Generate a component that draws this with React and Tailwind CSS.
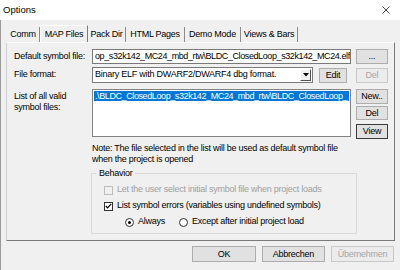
import React from 'react';

const font = { fontFamily: '"Liberation Sans", Arial, sans-serif' };

const Btn = ({ children, className = '', disabled, focus }) => (
  <div
    className={`flex items-center justify-center border text-[9px] leading-none ${
      disabled
        ? 'bg-[#ececec] border-[#c8c8c8] text-[#a6a6a6]'
        : focus
        ? 'bg-[#e1e1e1] border-[#3a3a3a] text-black'
        : 'bg-[#e1e1e1] border-[#adadad] text-black'
    } ${className}`}
  >
    {children}
  </div>
);

const Tab = ({ label, active, w }) => (
  <div
    className={`flex items-center justify-center text-[9px] ${
      active
        ? 'h-[18px] bg-[#f0f0f0] border-t border-l border-white border-r border-r-[#7a7a7a] -mb-px'
        : 'h-[15px] border-r border-[#8a8a8a]'
    }`}
    style={{ width: w }}
  >
    {label}
  </div>
);

export default function App() {
  return (
    <div className="w-[400px] h-[270px] bg-white overflow-hidden flex flex-col text-black tracking-[-0.25px]" style={font}>
      {/* title bar */}
      <div className="h-[20px] flex items-center justify-between pl-[3px] pr-[10px] bg-white">
        <span className="text-[9.5px] tracking-normal">Options</span>
        <svg width="8" height="8" viewBox="0 0 8 8">
          <path d="M0.5 0.5 L7.5 7.5 M7.5 0.5 L0.5 7.5" stroke="#333" strokeWidth="0.9" />
        </svg>
      </div>

      <div className="flex-1 bg-[#f0f0f0] border-l border-[#9a9a9a] flex flex-col">
        {/* tabs */}
        <div className="flex items-end pl-[6px] mt-[4px] h-[18px]">
          <Tab label="Comm" w={33} />
          <Tab label="MAP Files" active w={48} />
          <Tab label="Pack Dir" w={38} />
          <Tab label="HTML Pages" w={59} />
          <Tab label="Demo Mode" w={56} />
          <Tab label="Views & Bars" w={57} />
        </div>

        {/* tab panel */}
        <div className="ml-[5px] w-[389px] h-[199px] border border-t-white border-l-[#d0d0d0] border-r-[#7a7a7a] border-b-[#7a7a7a] flex flex-col pl-[7px] pt-[6px] text-[9px]">
          {/* default symbol file */}
          <div className="flex items-center h-[15px]">
            <div className="w-[78px]">Default symbol file:</div>
            <div className="w-[259px] h-[15px] bg-white border border-[#7a7a7a] flex items-center pl-[2px] overflow-hidden whitespace-nowrap tracking-[-0.4px]">
              op_s32k142_MC24_mbd_rtw\BLDC_ClosedLoop_s32k142_MC24.elf
            </div>
            <Btn className="ml-[5px] w-[32px] h-[15px]">...</Btn>
          </div>

          {/* file format */}
          <div className="flex items-center h-[16px] mt-[3px]">
            <div className="w-[78px]">File format:</div>
            <div className="w-[221px] h-[16px] bg-white border border-[#7a7a7a] flex items-center pl-[2px] pr-[1px]">
              <span className="flex-1 whitespace-nowrap overflow-hidden">Binary ELF with DWARF2/DWARF4 dbg format.</span>
              <div className="w-[11px] h-[12px] bg-[#f0f0f0] border border-t-white border-l-white border-r-[#555] border-b-[#555] flex items-center justify-center">
                <svg width="6" height="4" viewBox="0 0 6 4">
                  <path d="M0 0 L6 0 L3 3.5 Z" fill="#000" />
                </svg>
              </div>
            </div>
            <Btn className="ml-[6px] w-[28px] h-[15px]">Edit</Btn>
            <Btn disabled className="ml-[9px] w-[32px] h-[15px]">Del</Btn>
          </div>

          {/* list of symbol files */}
          <div className="flex mt-[6px]">
            <div className="w-[78px] pt-[2px] leading-[11px]">
              List of all valid
              <br />
              symbol files:
            </div>
            <div className="w-[259px] h-[48px] bg-white border border-[#828282] p-[1px] overflow-hidden">
              <div className="bg-[#0078d7] text-white whitespace-nowrap h-[10px] leading-[10px] pl-[1px] tracking-[-0.4px]">
                .\BLDC_ClosedLoop_s32k142_MC24_mbd_rtw\BLDC_ClosedLoop_
              </div>
            </div>
            <div className="ml-[5px] flex flex-col">
              <Btn className="w-[32px] h-[15px]">New..</Btn>
              <Btn className="w-[32px] h-[14px] mt-[2px]">Del</Btn>
              <Btn focus className="w-[32px] h-[15px] mt-[4px]">View</Btn>
            </div>
          </div>

          {/* note */}
          <div className="ml-[78px] mt-[4px] leading-[10.5px]">
            Note: The file selected in the list will be used as default symbol file
            <br />
            when the project is opened
          </div>

          {/* behavior group */}
          <div className="ml-[77px] mt-[9px] w-[266px] h-[61px] border border-[#d9d9d9] relative flex flex-col pl-[12px] pt-[11px]">
            <div className="absolute -top-[6px] left-[5px] px-[2px] bg-[#f0f0f0] leading-[10px]">Behavior</div>
            <div className="flex items-center h-[10px]">
              <div className="w-[9px] h-[9px] border border-[#bcbcbc] bg-[#f0f0f0]" />
              <span className="ml-[4px] text-[#a0a0a0]">Let the user select initial symbol file when project loads</span>
            </div>
            <div className="flex items-center h-[10px] mt-[6px]">
              <div className="w-[9px] h-[9px] border border-[#333] bg-white flex items-center justify-center">
                <svg width="7" height="6" viewBox="0 0 7 6">
                  <path d="M0.8 3 L2.6 4.8 L6.2 0.8" stroke="#000" strokeWidth="1.2" fill="none" />
                </svg>
              </div>
              <span className="ml-[4px]">List symbol errors (variables using undefined symbols)</span>
            </div>
            <div className="flex items-center h-[10px] mt-[6px] pl-[21px]">
              <div className="w-[9px] h-[9px] rounded-full border border-[#333] bg-white flex items-center justify-center">
                <div className="w-[3px] h-[3px] rounded-full bg-black" />
              </div>
              <span className="ml-[4px]">Always</span>
              <div className="ml-[14px] w-[9px] h-[9px] rounded-full border border-[#333] bg-white" />
              <span className="ml-[4px]">Except after initial project load</span>
            </div>
          </div>
        </div>

        {/* bottom buttons */}
        <div className="flex justify-end pr-[6px] mt-[5px]">
          <Btn className="w-[64px] h-[16px]">OK</Btn>
          <Btn className="ml-[6px] w-[63px] h-[16px]">Abbrechen</Btn>
          <Btn disabled className="ml-[6px] w-[63px] h-[16px]">Übernehmen</Btn>
        </div>
      </div>
    </div>
  );
}
